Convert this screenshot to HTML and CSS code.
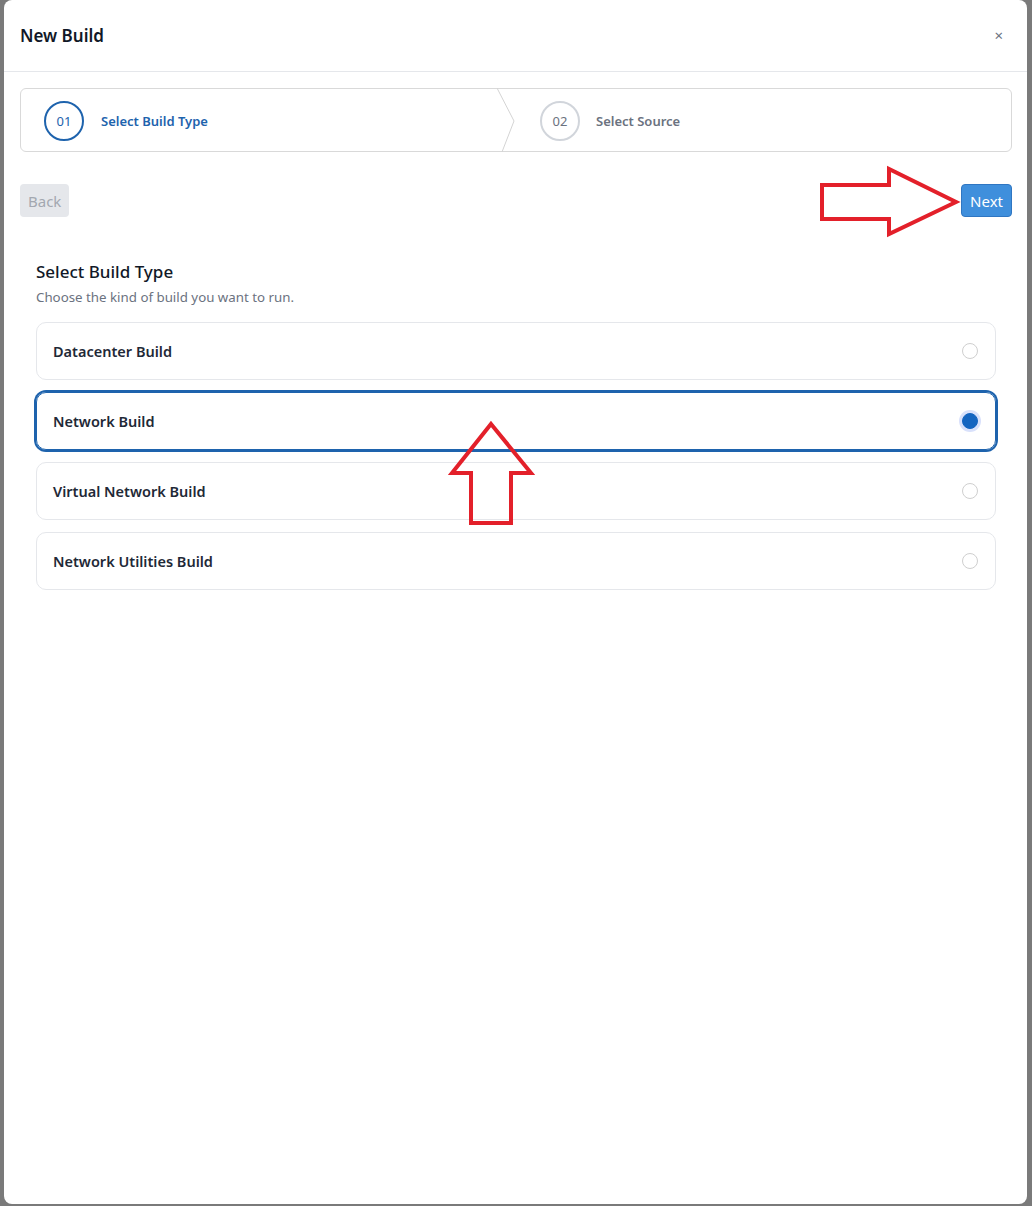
FILE: index.html
```html
<!DOCTYPE html>
<html lang="en">
<head>
<meta charset="utf-8">
<title>New Build</title>
<link rel="stylesheet" href="styles.css">
</head>
<body>
<div class="modal">
  <div class="modal-header">
    <h1 class="modal-title">New Build</h1>
    <span class="close">&#215;</span>
  </div>
  <div class="modal-body">
    <div class="stepper">
      <div class="step active">
        <span class="step-num">01</span>
        <span class="step-label">Select Build Type</span>
      </div>
      <svg class="chevron" width="18" height="64" viewBox="0 0 18 64"><polyline points="0,0 17,33 5,64" fill="none" stroke="#d4d4d4" stroke-width="1"/></svg>
      <div class="step">
        <span class="step-num">02</span>
        <span class="step-label">Select Source</span>
      </div>
    </div>
    <div class="nav-row">
      <button class="btn btn-back">Back</button>
      <button class="btn btn-next">Next</button>
    </div>
    <div class="section">
      <h2 class="section-title">Select Build Type</h2>
      <p class="section-sub">Choose the kind of build you want to run.</p>
      <div class="options">
        <div class="option"><span class="option-label">Datacenter Build</span><span class="radio"></span></div>
        <div class="option selected"><span class="option-label">Network Build</span><span class="radio"></span></div>
        <div class="option"><span class="option-label">Virtual Network Build</span><span class="radio"></span></div>
        <div class="option"><span class="option-label">Network Utilities Build</span><span class="radio"></span></div>
      </div>
    </div>
  </div>
</div>
<svg class="annotations" width="1032" height="1206" viewBox="0 0 1032 1206">
  <polygon points="822,185 889,185 889,169 956,202 889,234 889,219 822,219" fill="none" stroke="#e3202a" stroke-width="4" stroke-linejoin="miter"/>
  <polygon points="491,424 531,473 511,473 511,523 471,523 471,473 452,473" fill="none" stroke="#e3202a" stroke-width="4" stroke-linejoin="miter"/>
</svg>
</body>
</html>
```
FILE: styles.css
```css
* { box-sizing: border-box; }
html, body { margin: 0; padding: 0; }
body {
  background: #7a7a7a;
  font-family: "Noto Sans", "Open Sans", sans-serif;
  color: #1f2937;
  width: 1032px;
  height: 1206px;
  overflow: hidden;
  position: relative;
}
.modal {
  margin-left: 4px;
  width: 1023px;
  height: 1204px;
  background: #fff;
  border-radius: 8px;
}
.modal-header {
  height: 72px;
  border-bottom: 1px solid #e5e7eb;
  display: flex;
  align-items: center;
  justify-content: space-between;
  padding: 0 24px 0 16px;
}
.modal-title {
  margin: 0;
  font-size: 17px;
  font-weight: 600;
  color: #111827;
}
.close {
  font-size: 15px;
  color: #6b7280;
  line-height: 1;
}
.modal-body {
  padding: 16px 15px 16px 16px;
}
.stepper {
  height: 64px;
  border: 1px solid #d9d9d9;
  border-radius: 6px;
  display: grid;
  grid-template-columns: 476px 18px 1fr;
  align-items: center;
}
.chevron { display: block; margin-top: -1px; }
.step {
  display: flex;
  align-items: center;
  gap: 17px;
  padding-left: 23px;
}
.chevron + .step { padding-left: 25px; gap: 16px; }
.step-num {
  width: 40px;
  height: 40px;
  border-radius: 50%;
  border: 2px solid #d1d5db;
  display: flex;
  align-items: center;
  justify-content: center;
  font-size: 13px;
  color: #6b7280;
}
.step-label {
  font-size: 13px;
  font-weight: 600;
  color: #6b7280;
}
.step.active .step-num { border-color: #1e63ad; color: #1e63ad; }
.step.active .step-label { color: #1e63ad; }
.nav-row {
  display: flex;
  justify-content: space-between;
  margin-top: 32px;
}
.btn {
  height: 33px;
  padding: 0 8px;
  font-family: inherit;
  font-size: 15px;
  border-radius: 4px;
  border: 1px solid transparent;
}
.btn-back {
  background: #e5e7eb;
  color: #a3a8b0;
  padding: 0 7px;
}
.btn-next {
  background: #3f8fdc;
  border-color: #2f76c2;
  color: #fff;
}
.section {
  padding: 43px 16px 0;
}
.section-title {
  margin: 0;
  font-size: 17px;
  font-weight: 500;
  color: #111827;
  line-height: 24px;
}
.section-sub {
  margin: 2px 0 0;
  font-size: 13.3px;
  color: #6b7280;
  line-height: 22px;
}
.options {
  margin-top: 14px;
  display: flex;
  flex-direction: column;
  gap: 12px;
}
.option {
  height: 58px;
  border: 1px solid #e5e7eb;
  border-radius: 10px;
  display: flex;
  align-items: center;
  justify-content: space-between;
  padding: 0 17px 0 16px;
}
.option.selected {
  border-color: #1e63ad;
  box-shadow: 0 0 0 2px #1e63ad;
}
.option-label {
  font-size: 14.5px;
  font-weight: 600;
  color: #1f2937;
}
.radio {
  width: 16px;
  height: 16px;
  border-radius: 50%;
  border: 1px solid #cfcfcf;
  background: #fff;
}
.option.selected .radio {
  background: #1565c0;
  border-color: #1565c0;
  box-shadow: 0 0 0 3px #d9e1fb;
}
.annotations {
  position: absolute;
  top: 0;
  left: 0;
  pointer-events: none;
}
```
